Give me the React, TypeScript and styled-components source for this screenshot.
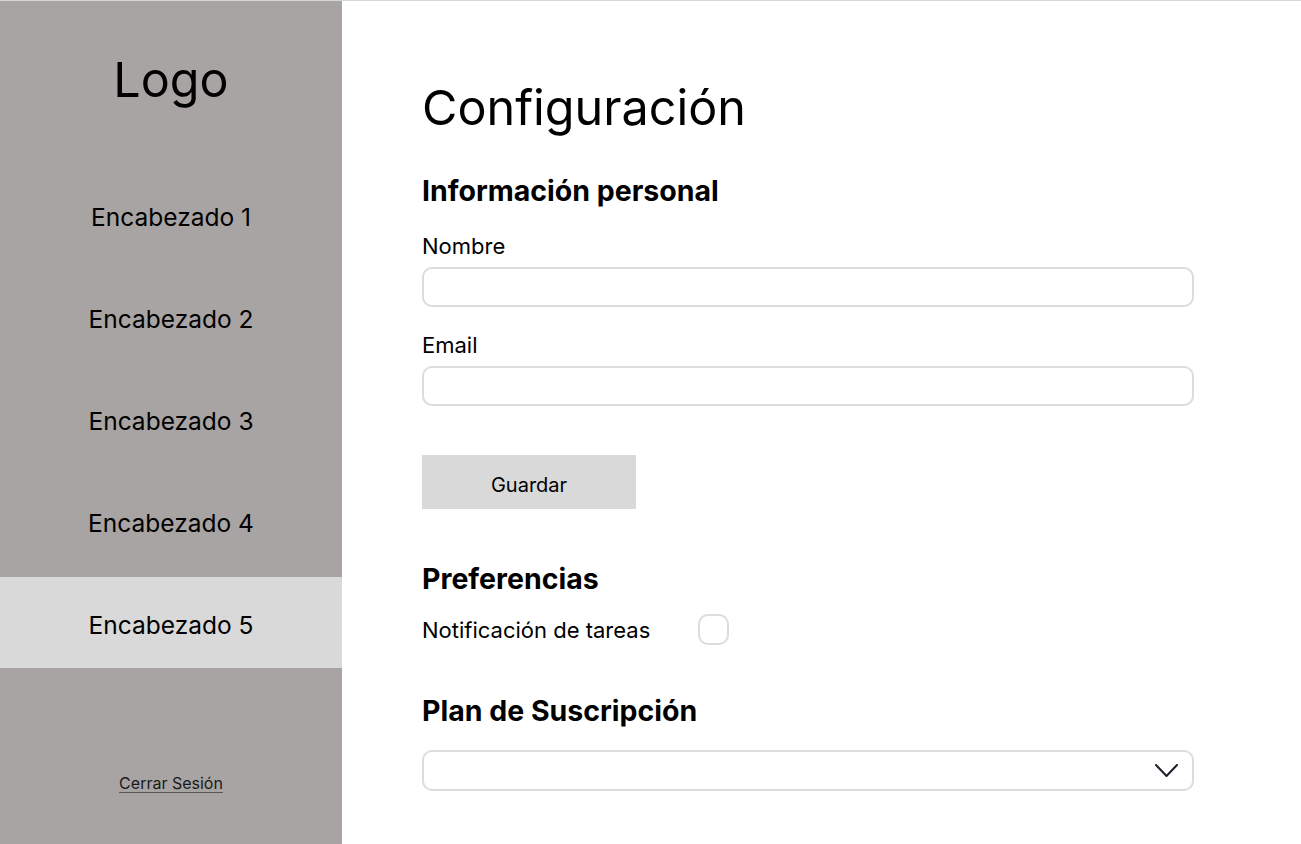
import styled, { createGlobalStyle } from 'styled-components';

const GlobalStyle = createGlobalStyle`
    html, body {
        margin: 0;
        padding: 0;
        background: #ffffff;
    }
    body {
        font-family: Inter, "Noto Sans", "Liberation Sans", sans-serif;
        color: #000000;
    }
`;

const Page = styled.div`
    display: flex;
    height: 844px;
    box-sizing: border-box;
    border-top: 1px solid #d6d6d6;
    overflow: hidden;
`;

const Sidebar = styled.aside`
    width: 342px;
    flex-shrink: 0;
    background: #a8a4a3;
    display: flex;
    flex-direction: column;
    padding: 49px 0 51px;
    box-sizing: border-box;
`;

const Logo = styled.div`
    font-size: 48.5px;
    line-height: 60px;
    text-align: center;
    margin-bottom: 59px;
`;

const NavList = styled.nav`
    display: flex;
    flex-direction: column;
    gap: 11px;
`;

const NavItem = styled.a<{ $active?: boolean }>`
    height: 91px;
    display: flex;
    align-items: center;
    justify-content: center;
    padding-top: 4px;
    box-sizing: border-box;
    font-size: 24.5px;
    line-height: 30px;
    color: #000000;
    text-decoration: none;
    background: ${(props) => (props.$active ? '#d9d9d9' : 'transparent')};
    cursor: pointer;
`;

const Logout = styled.a`
    margin-top: auto;
    align-self: center;
    font-size: 16px;
    line-height: 20px;
    color: #1a1a1a;
    text-decoration: underline;
    text-decoration-color: #555555;
    text-underline-offset: 3px;
    cursor: pointer;
`;

const Main = styled.main`
    flex: 1;
    padding: 78px 0 0 80px;
    display: flex;
    flex-direction: column;
`;

const Title = styled.h1`
    margin: 0 0 37px;
    font-size: 48.5px;
    line-height: 58px;
    font-weight: 400;
`;

const SectionTitle = styled.h2<{ $top?: number }>`
    margin: ${(props) => props.$top ?? 0}px 0 0;
    font-size: 28.5px;
    line-height: 34px;
    font-weight: 700;
`;

const FieldLabel = styled.label<{ $top?: number }>`
    display: block;
    margin-top: ${(props) => props.$top ?? 0}px;
    font-size: 22px;
    line-height: 24px;
`;

const TextInput = styled.input`
    display: block;
    margin-top: 9px;
    width: 772px;
    height: 40px;
    box-sizing: border-box;
    border: 2px solid #dcdcdc;
    border-radius: 10px;
    background: #ffffff;
    outline: none;
    font-family: inherit;
    font-size: 18px;
    padding: 0 12px;
`;

const SaveButton = styled.button`
    margin-top: 49px;
    width: 214px;
    height: 54px;
    border: none;
    background: #d9d9d9;
    font-family: inherit;
    font-size: 20px;
    color: #000000;
    padding-top: 6px;
    cursor: pointer;
`;

const ToggleRow = styled.div`
    margin-top: 18px;
    display: flex;
    align-items: center;
    gap: 48px;
    height: 30px;
`;

const RowLabel = styled.span`
    font-size: 22px;
    line-height: 24px;
    padding-top: 2px;
`;

const CheckBox = styled.span`
    width: 31px;
    height: 31px;
    box-sizing: border-box;
    border: 2px solid #dcdcdc;
    border-radius: 10px;
    background: #ffffff;
`;

const SelectBox = styled.div`
    margin-top: 22px;
    width: 772px;
    height: 41px;
    box-sizing: border-box;
    border: 2px solid #dcdcdc;
    border-radius: 10px;
    display: flex;
    align-items: center;
    justify-content: flex-end;
    padding-right: 14px;
`;

const Chevron = () => (
    <svg width="23" height="14" viewBox="0 0 23 14" fill="none">
        <polyline points="1,1 11.5,12 22,1" stroke="#1e1e28" strokeWidth="2" strokeLinecap="round" strokeLinejoin="round" />
    </svg>
);

const items = ['Encabezado 1', 'Encabezado 2', 'Encabezado 3', 'Encabezado 4', 'Encabezado 5'];

export default function App() {
    return (
        <>
            <GlobalStyle />
            <Page>
                <Sidebar>
                    <Logo>Logo</Logo>
                    <NavList>
                        {items.map((item, i) => (
                            <NavItem key={item} $active={i === 4}>
                                {item}
                            </NavItem>
                        ))}
                    </NavList>
                    <Logout>Cerrar Sesión</Logout>
                </Sidebar>
                <Main>
                    <Title>Configuración</Title>
                    <SectionTitle>Información personal</SectionTitle>
                    <FieldLabel $top={26}>Nombre</FieldLabel>
                    <TextInput type="text" />
                    <FieldLabel $top={26}>Email</FieldLabel>
                    <TextInput type="email" />
                    <div>
                        <SaveButton>Guardar</SaveButton>
                    </div>
                    <SectionTitle $top={53}>Preferencias</SectionTitle>
                    <ToggleRow>
                        <RowLabel>Notificación de tareas</RowLabel>
                        <CheckBox />
                    </ToggleRow>
                    <SectionTitle $top={50}>Plan de Suscripción</SectionTitle>
                    <SelectBox>
                        <Chevron />
                    </SelectBox>
                </Main>
            </Page>
        </>
    );
}
